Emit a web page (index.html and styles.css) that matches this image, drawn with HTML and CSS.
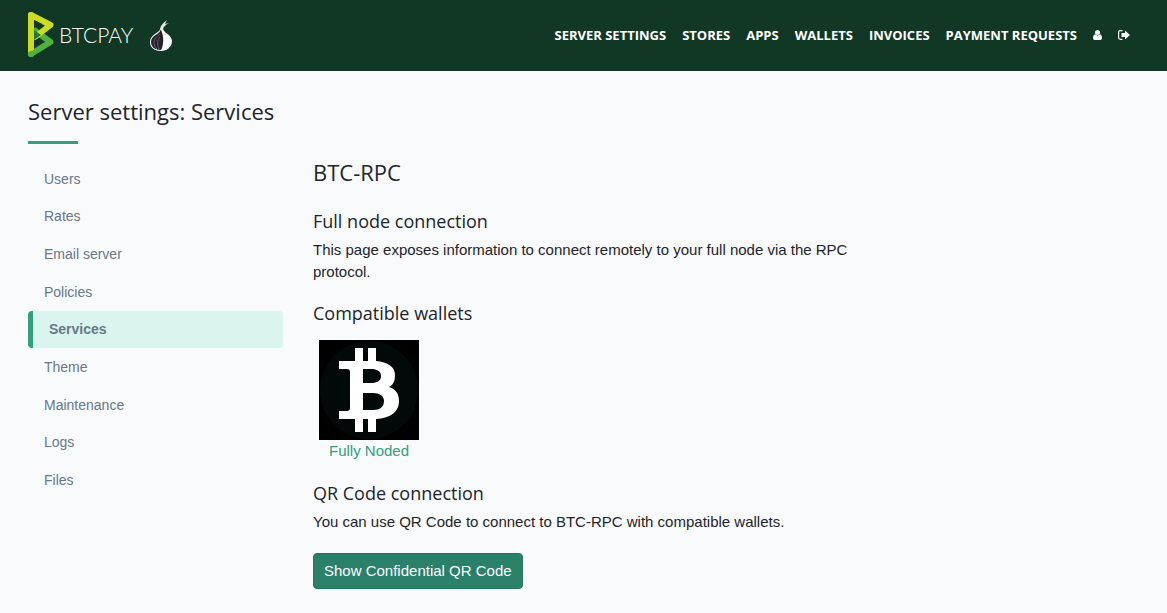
FILE: index.html
```html
<!DOCTYPE html>
<html lang="en">
<head>
<meta charset="utf-8">
<meta name="viewport" content="width=device-width, initial-scale=1">
<title>BTC-RPC</title>
<link rel="stylesheet" href="styles.css">
</head>
<body>
<header class="navbar">
  <div class="container navbar-inner">
    <a class="brand" href="#" aria-label="BTCPAY">
      <svg class="brand-mark" width="27" height="46" viewBox="0 0 27 46" aria-hidden="true">
        <path d="M3 42V3" fill="none" stroke="#cedc21" stroke-width="6" stroke-linecap="round"/>
        <path d="M3 42L22.500 30L6 18" fill="none" stroke="#51b13e" stroke-width="6" stroke-linecap="round" stroke-linejoin="round"/>
        <path d="M3 36V3L22.500 13L7 25" fill="none" stroke="#cedc21" stroke-width="6" stroke-linecap="round" stroke-linejoin="round"/>
        <path d="M6 18L13 23L6 28Z" fill="#1e7a44"/>
        <path d="M6 8V16L14 12Z" fill="#113725"/>
      </svg>
      <span class="brand-name">BTCPAY</span>
    </a>
    <a class="tor" href="#" aria-label="Tor">
      <svg width="24" height="34" viewBox="0 0 24 34" aria-hidden="true">
        <path d="M11 11C11 15 1 16 1 24C1 30 6 33 12 33C18 33 23 29 23 23C23 17 15 15 14 11Z" fill="#fff"/>
        <path d="M11.500 12C10 17 2 17 2 24C2 29 6 32 12 32C15 27 15 18 12 12Z" fill="#28232b"/>
        <path d="M11 16C7 20 5 20 5 25C5 28 6 29 8 31M11 19C8 22 8 27 10 31" fill="none" stroke="#777" stroke-width=".7"/>
        <path d="M11 12C11 8 14 5 18 2L16 6L20 5C16 7 14 9 14 12Z" fill="#dfe8e1"/>
      </svg>
    </a>
    <nav class="main-nav" aria-label="Main">
      <a href="#">SERVER SETTINGS</a>
      <a href="#">STORES</a>
      <a href="#">APPS</a>
      <a href="#">WALLETS</a>
      <a href="#">INVOICES</a>
      <a href="#">PAYMENT REQUESTS</a>
      <a href="#" aria-label="Account">
        <svg width="9" height="12" viewBox="0 0 10 12" fill="#fff" aria-hidden="true"><circle cx="5" cy="3.2" r="2.8"/><path d="M2.200 5.200C.8 5.600 0 7.400 0 9.400C0 10.800.9 11.600 2 11.600H8C9.100 11.600 10 10.800 10 9.400C10 7.400 9.200 5.600 7.800 5.200C6.200 6.900 3.800 6.900 2.200 5.200Z"/></svg>
      </a>
      <a href="#" aria-label="Log out">
        <svg width="12" height="12" viewBox="0 0 12 12" aria-hidden="true"><path d="M4.500 1.700H2.500Q.6 1.700.6 3.500V8.500Q.6 10.300 2.500 10.300H4.500" fill="none" stroke="#fff" stroke-width="1.200"/><path d="M7 1.500L12 6L7 10.500V8H3.500V4H7Z" fill="#fff"/></svg>
      </a>
    </nav>
  </div>
</header>
<main class="container page">
  <h1 class="page-title">Server settings: Services</h1>
  <div class="columns">
    <nav class="side-nav" aria-label="Server settings">
      <a href="#">Users</a>
      <a href="#">Rates</a>
      <a href="#">Email server</a>
      <a href="#">Policies</a>
      <a class="active" href="#" aria-current="page">Services</a>
      <a href="#">Theme</a>
      <a href="#">Maintenance</a>
      <a href="#">Logs</a>
      <a href="#">Files</a>
    </nav>
    <div class="content">
      <h2>BTC-RPC</h2>
      <section>
        <h3>Full node connection</h3>
        <p>This page exposes information to connect remotely to your full node via the RPC protocol.</p>
      </section>
      <section>
        <h3>Compatible wallets</h3>
        <a class="wallet" href="#">
          <svg width="100" height="100" viewBox="0 0 100 100" aria-hidden="true">
            <path d="M0 0H100V100H0Z" fill="#000"/>
            <circle cx="50" cy="50" r="49" fill="#030808"/>
            <path fill="#fff" fill-rule="evenodd" d="M36 8H44V21H49V8H57V21C69 22 76 27 76 35C76 41 74 45 70 47C77 49 80 54 80 61C80 72 72 78 57 79V92H49V79H44V92H36V79H20V71H28Q31 71 31 68V32Q31 29 28 29H20V21H36ZM44 29V43H52C58 43 62 41 62 36C62 31 58 29 52 29ZM44 53V70H54C61 70 65 67 65 61C65 56 61 53 54 53Z"/>
          </svg>
          <span>Fully Noded</span>
        </a>
      </section>
      <section>
        <h3>QR Code connection</h3>
        <p>You can use QR Code to connect to BTC-RPC with compatible wallets.</p>
        <button class="btn" type="button">Show Confidential QR Code</button>
      </section>
    </div>
  </div>
</main>
</body>
</html>
```
FILE: styles.css
```css
* { box-sizing: border-box; }
body {
  margin: 0;
  background: #f9fafc;
  color: #212529;
  font: 15px/22px "Liberation Sans", Arial, sans-serif;
}
a { text-decoration: none; }
h1, h2, h3, p { margin: 0; }
h1, h2, h3 { font-family: "Open Sans", sans-serif; font-weight: 400; }
svg { display: block; }
.container { max-width: 1141px; margin: 0 auto; padding: 0 15px; }
.navbar { background: #113725; }
.navbar-inner { display: flex; align-items: center; padding-top: 12px; padding-bottom: 13px; }
.brand { display: flex; align-items: center; gap: 4px; color: #fff; }
.brand-name { font: 300 21px/24px Lato, sans-serif; }
.tor { margin-left: 16px; }
.main-nav { display: flex; align-items: center; gap: 16px; margin-left: auto; padding-right: 9px; }
.main-nav a { color: #fff; font: 800 13px/20px "Open Sans", sans-serif; font-weight: 700; }
.page { padding-top: 25px; padding-bottom: 24px; }
.page-title { font-size: 22px; line-height: 30px; }
.page-title::after { content: ""; display: block; width: 50px; height: 3px; margin-top: 15px; background: #329f80; }
.columns { display: grid; grid-template-columns: 255px minmax(0, 1fr); gap: 30px; margin-top: 16px; align-items: start; }
.side-nav { display: grid; grid-auto-rows: 1fr; min-height: 339px; font-size: 14px; }
.side-nav a { display: flex; align-items: center; padding: 0 16px; color: #68788a; border-radius: 4px; }
.side-nav .active { border-left: 5px solid #329f80; background: #daf5ed; font-weight: 700; }
.content { display: grid; gap: 18px; max-width: 540px; }
h2 { font-size: 22px; line-height: 24px; margin-bottom: 7px; }
h3 { font-size: 18px; line-height: 24px; margin-bottom: 6px; }
.wallet { display: inline-flex; flex-direction: column; align-items: center; padding: 9px 6px 1px; color: #329f80; }
.btn { margin-top: 20px; padding: 6px 10px; border: 1px solid #267560; border-radius: 4px; background: #2a8068; color: #fff; font: inherit; }
```
